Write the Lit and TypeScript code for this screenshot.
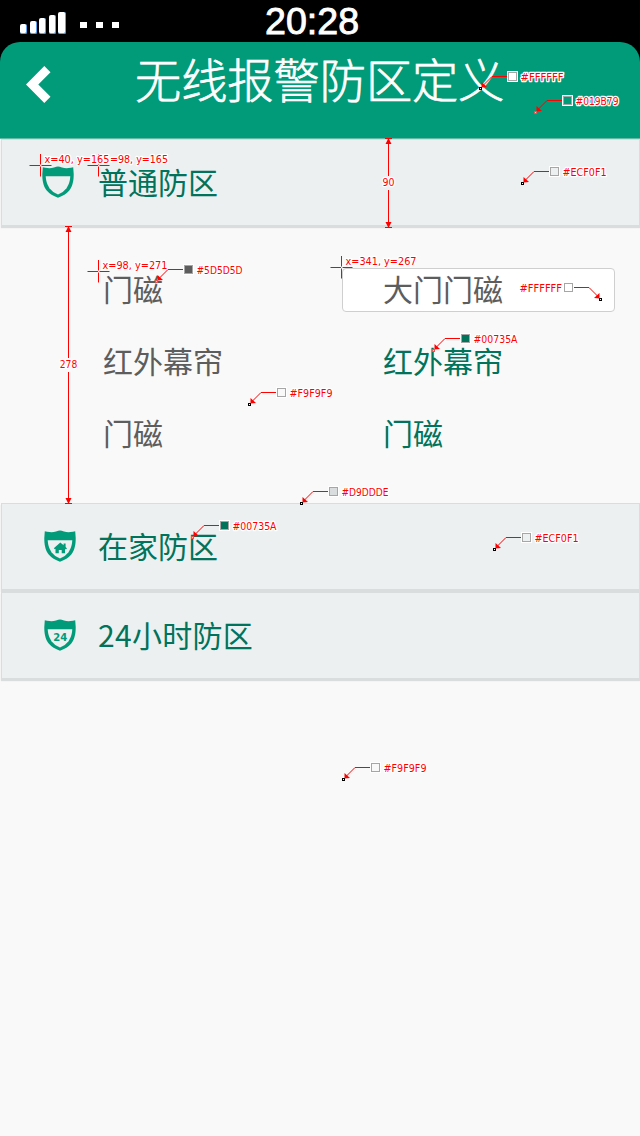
import { LitElement, html, svg, css, nothing } from "lit";
import { customElement, property } from "lit/decorators.js";

type Glyph = "plain" | "home" | "day";

@customElement("shield-icon")
class ShieldIcon extends LitElement {
  @property() glyph: Glyph = "plain";

  static styles = css`
    :host { display: block; width: 32px; height: 32px; }
    svg { display: block; }
    .body { fill: #019b79; }
    .inner { fill: #ecf0f1; }
    .num { font: bold 11px "DejaVu Sans", sans-serif; fill: #019b79; }
  `;

  render() {
    return html`<svg width="32" height="32" viewBox="0 0 32 32">
      <path class="body" d="M.8 1.2Q3 1.8 5.5 2.1Q9 2.5 12 1.5Q14.5.7 16 .5Q17.5.7 20 1.5Q23 2.5 26.5 2.1Q29 1.8 31.2 1.2L31.7 8C31.8 14 30.8 20 27.3 24.6Q23.2 29.4 16 31.8Q8.800 29.4 4.700 24.600C1.200 20 .2 14 .3 8Z"/>
      <path class="inner" d="M3.700 10.300H28.300Q28 17 24.500 22.200Q21.500 26.300 16 28.500Q10.500 26.300 7.500 22.200Q4 17 3.700 10.300Z"/>
      ${this.glyph === "home"
        ? svg`<path class="body" d="M16.300 12.600L19.600 15.300V13.500H21.600V17L23 18.400L21.800 19.400L21 18.800V23.200H17.700V20H14.800V23.200H11.500V18.800L10.900 19.300L9.800 18.300Z"/>`
        : nothing}
      ${this.glyph === "day"
        ? svg`<text class="num" x="9.300" y="21.500" textLength="14" lengthAdjust="spacingAndGlyphs">24</text>`
        : nothing}
    </svg>`;
  }
}

interface Swatch { box: [number, number]; fill: string; label: string; tx: number; w?: number; tip: [number, number]; pink?: boolean; }

const swatches: Swatch[] = [
  { box: [508, 72], fill: "#ffffff", label: "#FFFFFF", tx: 520.500, w: 43, tip: [480, 88] },
  { box: [563, 96], fill: "#019b79", label: "#019B79", tx: 575.500, w: 43, tip: [535, 112], pink: true },
  { box: [550, 167], fill: "#ecf0f1", label: "#ECF0F1", tx: 562.500, w: 44, tip: [522, 183] },
  { box: [184, 265], fill: "#5d5d5d", label: "#5D5D5D", tx: 196.500, w: 46, tip: [156, 281], pink: true },
  { box: [461, 334], fill: "#00735a", label: "#00735A", tx: 473.500, w: 44, tip: [433, 350], pink: true },
  { box: [277, 388], fill: "#f9f9f9", label: "#F9F9F9", tx: 289.500, w: 43, tip: [249, 404] },
  { box: [329, 487], fill: "#d9ddde", label: "#D9DDDE", tx: 341.500, w: 47, tip: [301, 503] },
  { box: [220, 521], fill: "#00735a", label: "#00735A", tx: 232.500, w: 44, tip: [192, 537], pink: true },
  { box: [522, 533], fill: "#ecf0f1", label: "#ECF0F1", tx: 534.500, w: 44, tip: [494, 549] },
  { box: [371, 763], fill: "#f9f9f9", label: "#F9F9F9", tx: 383.500, w: 43, tip: [343, 779] },
  { box: [564, 283], fill: "#ffffff", label: "#FFFFFF", tx: 519.500, w: 42.500, tip: [600, 299] },
];

const points = [
  { x: 40, y: 165, label: "x=40, y=165", w: 65 },
  { x: 98, y: 165, label: "=98, y=165", w: 58, tx: 110 },
  { x: 98, y: 271, label: "x=98, y=271", w: 65 },
  { x: 341, y: 267, label: "x=341, y=267", w: 71 },
];

const spans = [
  { x: 388, top: 138, bottom: 227, label: "90", w: 12, mid: 182 },
  { x: 68, top: 226, bottom: 503, label: "278", w: 17.500, mid: 364 },
];

/** Red measurement and colour call-outs laid over the screen. */
@customElement("spec-layer")
class SpecLayer extends LitElement {
  static styles = css`
    :host { display: block; }
    svg { display: block; }
    .note { font: 11px "DejaVu Sans Condensed", "DejaVu Sans", sans-serif; font-stretch: condensed; fill: #f00; stroke: #fff; stroke-width: 2.500px; stroke-linejoin: round; paint-order: stroke; }
    .line { fill: none; stroke: #f00; stroke-width: 1; }
    .halo { fill: none; stroke: #fff; stroke-width: 3; }
    .head { fill: #f00; }
    .box { stroke: #a6a6a6; stroke-width: 1; }
    .dot { fill: #fff; stroke: #000; stroke-width: 1; }
    .pink { fill: #fcc; stroke: #f05050; }
  `;

  private text(x: number, y: number, w: number, label: string) {
    return svg`<text class="note" x=${x} y=${y} textLength=${w} lengthAdjust="spacingAndGlyphs">${label}</text>`;
  }

  private swatch(s: Swatch) {
    const [bx, by] = s.box;
    const [tx, ty] = s.tip;
    const d = tx > bx ? -1 : 1;
    const cy = by + 4.500;
    const edge = d > 0 ? bx - 1 : bx + 10;
    return svg`
      <path class="line" d="M${edge} ${cy}H${tx + 0.500 + 11.500 * d}L${tx + 0.500 + 2 * d} ${ty - 2}"/>
      <path class="head" d="M${tx + 0.500 + 1 * d} ${ty - 0.500}V${ty - 6}L${tx + 0.500 + 6.500 * d} ${ty - 1}Z"/>
      <rect class="dot ${s.pink ? "pink" : ""}" x=${tx - 0.500} y=${ty - 0.500} width="2" height="2"/>
      <rect class="halo" x=${bx + 0.500} y=${by + 0.500} width="8" height="8"/>
      <rect class="box" x=${bx + 0.500} y=${by + 0.500} width="8" height="8" fill=${s.fill}/>
      ${this.text(s.tx, by + 9, s.w ?? 43, s.label)}`;
  }

  render() {
    return html`<svg width="640" height="1136" viewBox="0 0 640 1136">
      ${spans.map((s) => svg`
        <path class="line" d="M${s.x - 3} ${s.top + 0.500}h7M${s.x - 3} ${s.bottom + 0.500}h7M${s.x + 0.500} ${s.top}V${s.mid - 6}M${s.x + 0.500} ${s.mid + 8}V${s.bottom}"/>
        <path class="head" d="M${s.x + 0.500} ${s.top}l3 6h-6zM${s.x + 0.500} ${s.bottom + 1}l3 -6h-6z"/>
        ${this.text(s.x + 0.500 - s.w / 2, s.mid + 4, s.w, s.label)}`)}
      ${points.map((p) => svg`
        <path class="line" d="M${p.x - 10.500} ${p.y + 0.500}h10.500M${p.x + 1.500} ${p.y + 0.500}h10M${p.x + 0.500} ${p.y - 11}v10.500M${p.x + 0.500} ${p.y + 1.500}v10"/>`)}
      ${points.map((p) => this.text(p.tx ?? p.x + 4.500, p.y - 2, p.w, p.label))}
      ${swatches.map((s) => this.swatch(s))}
    </svg>`;
  }
}

const bars = [10, 13, 16, 19, 22];
const rows = [
  { name: "门磁", alias: "大门门磁", editing: true },
  { name: "红外幕帘", alias: "红外幕帘", editing: false },
  { name: "门磁", alias: "门磁", editing: false },
];

@customElement("app-root")
class AppRoot extends LitElement {
  static styles = css`
    :host { display: block; position: relative; width: 640px; height: 1136px; overflow: hidden; background: #f9f9f9; font-family: "Noto Sans CJK SC", sans-serif; }
    * { box-sizing: border-box; }
    .top { background: #000; }
    .status { display: grid; grid-template-columns: 265px 1fr; height: 42px; color: #fff; }
    .left { display: flex; align-items: flex-end; padding: 0 0 8px 20px; }
    .bars { display: flex; align-items: flex-end; gap: 2.400px; }
    .bar { display: block; width: 7.200px; border-radius: 2px; background: #fff; border-right: 1px solid #58a6f0; border-bottom: 1px solid #58a6f0; }
    .dots { display: flex; gap: 9px; padding: 0 0 6px 14px; }
    .sq { width: 7px; height: 6px; background: #fff; }
    .clock { font: 37.600px/42px "Liberation Sans", Arial, sans-serif; -webkit-text-stroke: .9px #fff; white-space: nowrap; }
    .header { display: grid; grid-template-columns: 135px 1fr; height: 97px; background: #019b79; border-radius: 20px 20px 0 0; border-bottom: 1px solid #62b9a5; }
    .back { padding: 24px 0 0 26px; }
    .back svg { display: block; }
    .title { font-size: 46.200px; line-height: 72px; font-weight: 300; -webkit-text-stroke: .7px #fff; color: #fff; white-space: nowrap; }
    .section { display: flex; align-items: center; height: 87px; margin-left: 1px; padding: 0 0 1px 42px; background: #ecf0f1; border: 1px solid #d9ddde; box-shadow: 0 2px 1px #d9ddde; color: #00735a; font-size: 30px; line-height: 40px; }
    .first { padding-left: 40px; }
    .first .label { padding-left: 24px; }
    .next { margin-top: 2px; }
    .label { padding: 0 0 3px 22px; white-space: nowrap; }
    .next .label { letter-spacing: .3px; }
    .list { display: grid; grid-template-rows: repeat(3, 72px); height: 277px; padding: 28px 25px 0 103px; font-size: 30px; }
    .row { display: grid; grid-template-columns: 239px 273px; align-items: center; color: #5d5d5d; line-height: 36px; }
    .name { padding-bottom: 4px; }
    .value { display: block; height: 44px; padding: 1px 0 0 40px; border: 1px solid transparent; border-radius: 4px; color: #00735a; white-space: nowrap; }
    .editing { background: #fff; border-color: #cfcfcf; color: #5d5d5d; }
    .spec { position: absolute; inset: 0; }
  `;

  render() {
    return html`
      <div class="top">
        <div class="status">
          <div class="left">
            <div class="bars">${bars.map((h) => html`<span class="bar" style="height:${h}px"></span>`)}</div>
            <div class="dots"><span class="sq"></span><span class="sq"></span><span class="sq"></span></div>
          </div>
          <div class="clock">20:28</div>
        </div>
        <div class="header">
          <div class="back"><svg width="25" height="38" viewBox="0 0 25 38"><path d="M18.300 0L24.500 6.200L12.300 18.400L24.500 30.700L18.300 37L0 18.400Z" fill="#fff"/></svg></div>
          <div class="title">无线报警防区定义</div>
        </div>
      </div>
      <div class="section first"><shield-icon></shield-icon><span class="label">普通防区</span></div>
      <div class="list">
        ${rows.map((r) => html`<div class="row"><span class="name">${r.name}</span><span class="value ${r.editing ? "editing" : ""}">${r.alias}</span></div>`)}
      </div>
      <div class="section"><shield-icon glyph="home"></shield-icon><span class="label">在家防区</span></div>
      <div class="section next"><shield-icon glyph="day"></shield-icon><span class="label">24小时防区</span></div>
      <spec-layer class="spec"></spec-layer>
    `;
  }
}
